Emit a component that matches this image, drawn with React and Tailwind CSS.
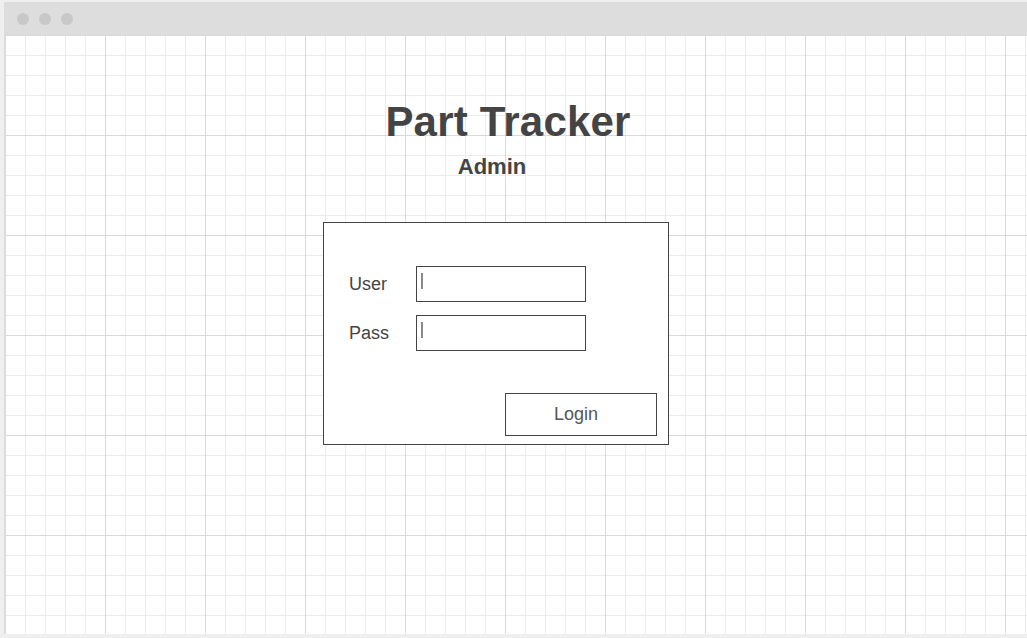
import React from 'react';

const gridBg =
  '[background-image:linear-gradient(to_right,#dadada_1px,transparent_1px),linear-gradient(to_bottom,#dadada_1px,transparent_1px),linear-gradient(to_right,#ececec_1px,transparent_1px),linear-gradient(to_bottom,#ececec_1px,transparent_1px)] [background-size:100px_100px,100px_100px,20px_20px,20px_20px]';

const Field = ({ label }) => (
  <div className="flex items-center">
    <span className="w-[67px] text-[18px] leading-[22px] text-[#444]">{label}</span>
    <div className="w-[170px] h-[36px] border border-[#444] bg-white pl-[4px] pt-[6px]">
      <div className="w-[2px] h-[16px] bg-[#888]"></div>
    </div>
  </div>
);

const App = () => {
  return (
    <div
      className="w-[1027px] h-[638px] bg-[#efefef] pt-[2px] pl-[4px] overflow-hidden flex flex-col"
      style={{ fontFamily: '"Liberation Sans", Arial, sans-serif' }}
    >
      {/* Browser title bar */}
      <div className="h-[33px] bg-[#dddddd] flex items-center gap-[10px] pl-[13px] shrink-0">
        <span className="w-[12px] h-[12px] rounded-full bg-[#c8c8c8]"></span>
        <span className="w-[12px] h-[12px] rounded-full bg-[#c8c8c8]"></span>
        <span className="w-[12px] h-[12px] rounded-full bg-[#c8c8c8]"></span>
      </div>

      {/* Page */}
      <div className={`h-[599px] bg-white border-l border-[#dcdcdc] flex flex-col ${gridBg}`}>
        <h1 className="mt-[63px] ml-[303px] w-[400px] text-center text-[42px] leading-[48px] font-bold text-[#444] tracking-[0.2px]">
          Part Tracker
        </h1>
        <h2 className="mt-[9px] ml-[387px] w-[200px] text-center text-[22px] leading-[24px] font-bold text-[#444]">
          Admin
        </h2>

        {/* Login box */}
        <div className="mt-[43px] ml-[318px] w-[346px] h-[223px] border border-[#444] bg-white flex flex-col">
          <div className="pt-[43px] pl-[25px] flex flex-col gap-[13px]">
            <Field label="User" />
            <Field label="Pass" />
          </div>
          <div className="mt-[42px] flex justify-end pr-[11px]">
            <button className="w-[152px] h-[43px] border border-[#444] bg-white text-[18px] text-[#555] pr-[10px]">
              Login
            </button>
          </div>
        </div>
      </div>
    </div>
  );
};

export default App;
